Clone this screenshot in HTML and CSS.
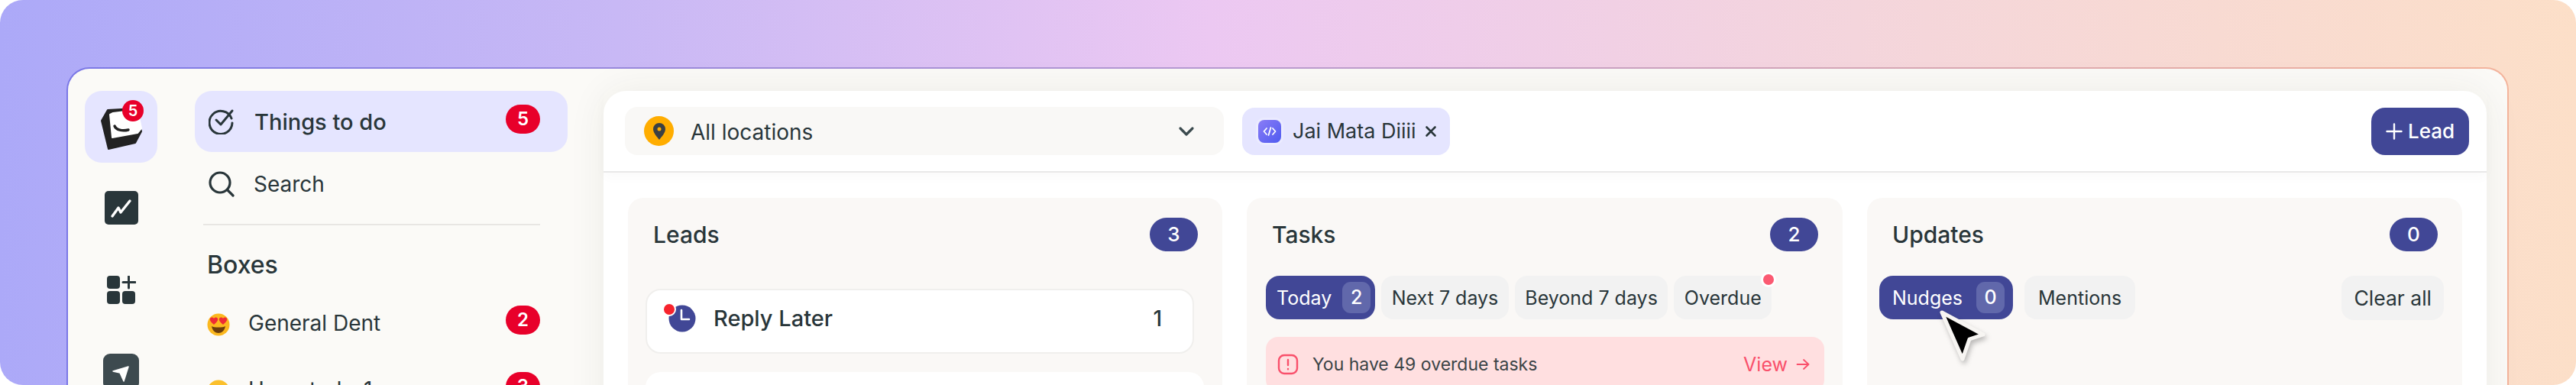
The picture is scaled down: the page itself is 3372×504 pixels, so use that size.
FILE: index.html
```html
<!DOCTYPE html>
<html lang="en">
<head>
  <meta charset="UTF-8" />
  <title>Things to do</title>
  <link rel="stylesheet" href="styles.css">
</head>
<body>

<div class="stage">
  <div class="window">

    <nav class="rail">
      <div class="rail-btn active">
        <svg class="logo" width="58" height="60" viewBox="0 0 58 60">
          <path d="M3 18L11 4l36-2 8 30-8 15-35 8z" fill="#222" stroke="#222" stroke-width="2" stroke-linejoin="round"/>
          <path d="M14 10l4-2 32-4 5 24-5 6-33 6z" fill="#fff" stroke="#fff" stroke-width="2" stroke-linejoin="round"/>
          <path d="M20 25c2 5 10 7 18 5" fill="none" stroke="#222" stroke-width="3.400" stroke-linecap="round"/>
        </svg>
        <span class="logo-badge">5</span>
      </div>
      <div class="rail-btn">
        <svg width="44" height="44" viewBox="0 0 44 44">
          <rect width="44" height="44" rx="5" fill="#29363a"/>
          <path d="M10 33l8-11 3 6 12-15" fill="none" stroke="#fff" stroke-width="3.400" stroke-linecap="round" stroke-linejoin="round"/>
        </svg>
      </div>
      <div class="rail-btn">
        <svg width="38" height="38" viewBox="0 0 38 38">
          <rect width="17" height="17" rx="4" fill="#29363a"/>
          <rect y="20" width="17" height="17" rx="4" fill="#29363a"/>
          <rect x="20" y="20" width="17" height="17" rx="4" fill="#29363a"/>
          <path d="M28.500 1v15M21 8.500h16" stroke="#29363a" stroke-width="3" stroke-linecap="round"/>
        </svg>
      </div>
      <div class="rail-btn">
        <svg width="47" height="47" viewBox="0 0 47 47">
          <rect width="47" height="47" rx="9" fill="#3d4a4f"/>
          <path d="M13 23l20-6-6 19-5-11z" fill="#fff" stroke="#fff" stroke-width="1.500" stroke-linejoin="round"/>
        </svg>
      </div>
    </nav>

    <aside class="sidebar">
      <div class="menu-item selected">
        <svg width="34" height="34" viewBox="0 0 34 34" fill="none" stroke="#29363a" stroke-width="3" stroke-linecap="round" stroke-linejoin="round">
          <path d="M30 13a15 15 0 1 0 1 6"/>
          <path d="M10 15l6 6L31 3"/>
        </svg>
        <span class="menu-label">Things to do</span>
        <span class="red-badge">5</span>
      </div>
      <div class="menu-item search">
        <svg width="34" height="34" viewBox="0 0 34 34" fill="none" stroke="#29363a" stroke-width="3.200" stroke-linecap="round">
          <circle cx="15" cy="15" r="13"/>
          <path d="M25 25l7 7"/>
        </svg>
        <span class="menu-label">Search</span>
      </div>
      <div class="side-divider"></div>
      <h2 class="boxes-title">Boxes</h2>
      <div class="box-row">
        <svg class="emoji" width="30" height="30" viewBox="0 0 30 30">
          <circle cx="15" cy="15" r="14.500" fill="#fbb81f"/>
          <path d="M6 17c3 2 15 2 18 0-1 6-5 9-9 9s-8-3-9-9z" fill="#6b3d0c"/>
          <path d="M9 15C6 12 3 10 4 7c1-2 4-2 5 0 1-2 4-2 5 0 1 3-2 5-5 8zM21 15c-3-3-6-5-5-8 1-2 4-2 5 0 1-2 4-2 5 0 1 3-2 5-5 8z" fill="#ee2b36"/>
        </svg>
        <span class="box-name">General Dent</span>
        <span class="red-badge">2</span>
      </div>
      <div class="box-row">
        <svg class="emoji" width="30" height="30" viewBox="0 0 30 30">
          <circle cx="15" cy="15" r="14.500" fill="#fbc02d"/>
          <path d="M7 18c3 2 13 2 16 0-1 5-4 8-8 8s-7-3-8-8z" fill="#6b3d0c"/>
          <circle cx="10" cy="10" r="2" fill="#6b3d0c"/>
          <circle cx="20" cy="10" r="2" fill="#6b3d0c"/>
        </svg>
        <span class="box-name">Unsorted - 1</span>
        <span class="red-badge">3</span>
      </div>
    </aside>

    <main class="panel">
      <header class="topbar">
        <div class="location">
          <span class="pin">
            <svg width="16" height="22" viewBox="0 0 16 22">
              <path fill-rule="evenodd" d="M8 0a8 8 0 0 1 8 8c0 5-5 10-8 14C5 18 0 13 0 8a8 8 0 0 1 8-8zm0 5.500a2.500 2.500 0 1 0 0 5 2.500 2.500 0 0 0 0-5z" fill="#3b4043"/>
            </svg>
          </span>
          <span class="location-name">All locations</span>
          <svg class="chevron" width="22" height="14" viewBox="0 0 22 14" fill="none" stroke="#3b4a4e" stroke-width="3.200" stroke-linecap="round" stroke-linejoin="round">
            <path d="M3 3l8 8 8-8"/>
          </svg>
        </div>
        <div class="chip">
          <span class="chip-icon">
            <svg width="18" height="14" viewBox="0 0 18 14" fill="none" stroke="#fff" stroke-width="1.800" stroke-linecap="round" stroke-linejoin="round">
              <path d="M5 3L1.500 7 5 11M13 3l3.500 4-3.500 4M10.500 2l-3 10"/>
            </svg>
          </span>
          <span class="chip-name">Jai Mata Diiii</span>
          <svg width="16" height="16" viewBox="0 0 16 16" stroke="#29363a" stroke-width="2.600" stroke-linecap="round">
            <path d="M2.500 2.500l11 11M13.500 2.500l-11 11"/>
          </svg>
        </div>
        <button class="add-lead">
          <svg width="22" height="22" viewBox="0 0 22 22" stroke="#fff" stroke-width="2.400" stroke-linecap="round">
            <path d="M11 1.500v19M1.500 11h19"/>
          </svg>
          Lead
        </button>
      </header>

      <section class="columns">
        <div class="column">
          <div class="col-head">
            <h3>Leads</h3>
            <span class="count">3</span>
          </div>
          <div class="lead-card">
            <span class="clock">
              <svg width="36" height="36" viewBox="0 0 36 36">
                <circle cx="18" cy="18" r="17.500" fill="#414796"/>
                <path d="M17 7v12h10" fill="none" stroke="#fff" stroke-width="2.600" stroke-linecap="round" stroke-linejoin="round"/>
              </svg>
              <i class="clock-dot"></i>
            </span>
            <span class="lead-name">Reply Later</span>
            <span class="lead-num">1</span>
          </div>
          <div class="lead-card next"></div>
        </div>

        <div class="column">
          <div class="col-head">
            <h3>Tasks</h3>
            <span class="count">2</span>
          </div>
          <div class="tabs">
            <span class="tab on">Today <b class="tab-num">2</b></span>
            <span class="tab">Next 7 days</span>
            <span class="tab">Beyond 7 days</span>
            <span class="tab dotted">Overdue<i class="tab-dot"></i></span>
          </div>
          <div class="alert">
            <svg width="28" height="28" viewBox="0 0 28 28" fill="none" stroke="#f9506b" stroke-width="2.400" stroke-linecap="round">
              <rect x="2" y="2" width="24" height="24" rx="7"/>
              <path d="M14 8v7M14 20v.2"/>
            </svg>
            <span class="alert-text">You have 49 overdue tasks</span>
            <span class="alert-link">View</span>
            <svg class="alert-arrow" width="18" height="16" viewBox="0 0 18 16" fill="none" stroke="#f9506b" stroke-width="1.800" stroke-linecap="round" stroke-linejoin="round">
              <path d="M1.500 8h15M10 2l6.500 6-6.500 6"/>
            </svg>
          </div>
        </div>

        <div class="column updates">
          <div class="col-head">
            <h3>Updates</h3>
            <span class="count">0</span>
          </div>
          <div class="tabs">
            <span class="tab on">Nudges <b class="tab-num">0</b></span>
            <span class="tab">Mentions</span>
            <span class="tab clear">Clear all</span>
          </div>
        </div>
      </section>
    </main>
  </div>

  <svg class="cursor" width="70" height="76" viewBox="0 0 70 76">
    <path d="M6 6l54 29-18 6-9 26z" fill="#000" stroke="#f7f5f2" stroke-width="5" stroke-linejoin="round"/>
  </svg>
</div>

</body>
</html>
```

FILE: styles.css
```css
* {
  box-sizing: border-box;
}

html, body {
  margin: 0;
  padding: 0;
  background: #fff;
}

body {
  font-family: Inter, 'Noto Sans', sans-serif;
  color: #29363a;
  width: 3372px;
  height: 504px;
  overflow: hidden;
}

.stage {
  position: relative;
  height: 504px;
  padding: 88px 88px 0 87px;
  border-radius: 30px;
  overflow: hidden;
  background: linear-gradient(90deg, #aca9f8 0%, #c8b8f5 24%, #ecc8f2 47%, #f4d5dc 72%, #fcdfc8 100%);
}

.window {
  display: flex;
  height: 520px;
  padding: 29px 27px 0 22px;
  background: linear-gradient(#fbfaf7, #fbfaf7) padding-box, linear-gradient(90deg, #7b78e6, #b89ad2 47%, #f4b49c) border-box;
  border: 2px solid transparent;
  border-bottom: 0;
  border-radius: 30px 30px 0 0;
}

/* left icon rail */
.rail {
  width: 95px;
  flex-shrink: 0;
  display: flex;
  flex-direction: column;
  align-items: center;
}

.rail-btn {
  position: relative;
  width: 95px;
  display: flex;
  justify-content: center;
}

.rail-btn svg {
  display: block;
}

.rail-btn.active {
  height: 94px;
  padding-top: 21px;
  background: #e5e5ff;
  border-radius: 22px;
}

.rail-btn:nth-child(2) {
  margin-top: 37px;
}

.rail-btn:nth-child(3) {
  margin-top: 67px;
}

.rail-btn:nth-child(4) {
  margin-top: 64px;
}

.logo-badge {
  position: absolute;
  top: 12px;
  left: 49px;
  width: 28px;
  height: 28px;
  border-radius: 14px;
  background: #e8002a;
  color: #fff;
  font-size: 20px;
  font-weight: 600;
  line-height: 28px;
  text-align: center;
}

/* second column */
.sidebar {
  width: 488px;
  flex-shrink: 0;
  margin-left: 49px;
}

.menu-item {
  display: flex;
  align-items: center;
  height: 80px;
  padding: 0 36px 0 18px;
}

.menu-item.selected {
  background: #e5e5ff;
  border-radius: 22px;
}

.menu-item.search {
  padding-top: 4px;
}

.menu-label {
  flex: 1;
  margin-left: 26px;
  font-size: 29px;
  font-weight: 500;
}

.search .menu-label {
  margin-left: 25px;
  font-size: 28px;
  font-weight: 400;
}

.red-badge {
  width: 45px;
  height: 38px;
  border-radius: 19px;
  background: #e8002a;
  color: #fff;
  font-size: 24px;
  font-weight: 600;
  line-height: 38px;
  text-align: center;
}

.menu-item .red-badge {
  margin-top: -6px;
}

.side-divider {
  height: 2px;
  margin: 14px 36px 0 11px;
  background: #e8e6e3;
}

.boxes-title {
  margin: 32px 0 0 16px;
  font-size: 32px;
  line-height: 40px;
  font-weight: 500;
}

.box-row {
  display: flex;
  align-items: center;
  height: 38px;
  margin: 33px 36px 0 16px;
}

.box-row + .box-row {
  margin-top: 49px;
}

.emoji {
  flex-shrink: 0;
  margin-top: 11px;
}

.box-name {
  flex: 1;
  margin-left: 24px;
  padding-top: 7px;
  font-size: 28px;
}

/* main panel */
.panel {
  width: 2465px;
  flex-shrink: 0;
  margin-left: 47px;
  background: #fff;
  border-radius: 30px 30px 0 0;
  box-shadow: 0 0 50px rgba(60, 50, 30, 0.07);
}

.topbar {
  display: flex;
  align-items: center;
  height: 107px;
  padding: 0 23px 0 28px;
  border-bottom: 2px solid #e9e8e8;
  box-shadow: 0 6px 14px rgba(0, 0, 0, 0.025);
}

.location {
  display: flex;
  align-items: center;
  width: 784px;
  height: 63px;
  padding: 0 38px 0 25px;
  background: #f9f8f6;
  border-radius: 16px;
}

.pin {
  width: 39px;
  height: 39px;
  border-radius: 50%;
  background: #ffad00;
  display: flex;
  align-items: center;
  justify-content: center;
}

.location-name {
  flex: 1;
  margin-left: 22px;
  padding-top: 2px;
  font-size: 28px;
}

.chip {
  display: flex;
  align-items: center;
  width: 272px;
  height: 62px;
  margin-left: 24px;
  padding: 0 17px 0 21px;
  background: #e5e5ff;
  border-radius: 16px;
}

.chip-icon {
  width: 30px;
  height: 30px;
  border-radius: 8px;
  background: linear-gradient(135deg, #8a7cf6, #4f5bf0);
  box-shadow: 0 0 0 3px rgba(255, 255, 255, 0.25);
  display: flex;
  align-items: center;
  justify-content: center;
}

.chip-name {
  flex: 1;
  margin-left: 15px;
  font-size: 27px;
  white-space: nowrap;
}

.add-lead {
  display: flex;
  align-items: center;
  justify-content: center;
  gap: 7px;
  margin-left: auto;
  width: 128px;
  height: 62px;
  border: none;
  border-radius: 18px;
  background: #414796;
  color: #fff;
  font-family: inherit;
  font-size: 26px;
  font-weight: 500;
}

.columns {
  display: grid;
  grid-template-columns: 778px 780px 779px;
  column-gap: 32px;
  padding: 33px 0 0 32px;
}

.column {
  height: 300px;
  padding: 26px 24px 0 25px;
  background: #faf8f6;
  border-radius: 20px 20px 0 0;
}

.col-head {
  display: flex;
  align-items: center;
  justify-content: space-between;
  height: 44px;
  padding: 0 8px 0 8px;
}

.col-head h3 {
  margin: 0;
  font-size: 30px;
  font-weight: 500;
}

.count {
  width: 63px;
  height: 44px;
  border-radius: 22px;
  background: #414796;
  color: #fff;
  font-size: 26px;
  font-weight: 500;
  line-height: 44px;
  text-align: center;
}

.lead-card {
  display: flex;
  align-items: center;
  height: 85px;
  width: 718px;
  margin: 49px 0 0 -2px;
  padding: 0 40px 8px 28px;
  background: #fff;
  border: 2px solid #f0efed;
  border-radius: 20px;
}

.lead-card.next {
  width: 731px;
  margin-top: 24px;
  border: 0;
}

.clock {
  position: relative;
  height: 36px;
}

.clock svg {
  display: block;
}

.clock-dot {
  position: absolute;
  left: -8px;
  top: -3px;
  width: 18px;
  height: 18px;
  border: 2px solid #fff;
  border-radius: 50%;
  background: #f7232d;
}

.lead-name {
  flex: 1;
  margin-left: 23px;
  font-size: 29px;
  font-weight: 500;
}

.lead-num {
  font-size: 28px;
  font-weight: 500;
}

.tabs {
  display: flex;
  gap: 8px;
  margin-top: 32px;
}

.updates .tabs {
  gap: 15px;
  margin-left: -9px;
}

.tab {
  position: relative;
  display: flex;
  align-items: center;
  height: 57px;
  padding: 0 13.500px;
  border-radius: 16px;
  background: #f2f2f2;
  font-size: 25px;
  white-space: nowrap;
}

.updates .tab {
  padding: 0 18px;
}

.tab.on {
  gap: 14px;
  padding: 0 6px 0 14px;
  background: #414796;
  color: #fff;
  border-radius: 18px;
}

.updates .tab.on {
  gap: 18px;
  padding: 0 11px 0 17px;
}

.tab-num {
  width: 37px;
  height: 41px;
  border-radius: 11px;
  background: #6168ab;
  font-weight: 500;
  line-height: 41px;
  text-align: center;
}

.updates .tab.clear {
  margin-left: auto;
  padding: 0 16px;
  height: 58px;
  font-size: 26.500px;
}

.tab-dot {
  position: absolute;
  top: -5px;
  right: -6px;
  width: 20px;
  height: 20px;
  border: 3px solid #fff;
  border-radius: 50%;
  background: #fb5a72;
}

.alert {
  display: flex;
  align-items: center;
  height: 72px;
  margin-top: 23px;
  padding: 0 19px 0 15px;
  background: #ffdfe0;
  border-radius: 16px;
  font-size: 23px;
}

.alert-text {
  flex: 1;
  margin-left: 18px;
  color: #3b4447;
}

.alert-link {
  color: #f9506b;
  font-size: 25px;
}

.alert-arrow {
  margin-left: 11px;
}

.cursor {
  position: absolute;
  left: 2536px;
  top: 403px;
  filter: drop-shadow(2px 4px 3px rgba(0, 0, 0, 0.25));
}
```
